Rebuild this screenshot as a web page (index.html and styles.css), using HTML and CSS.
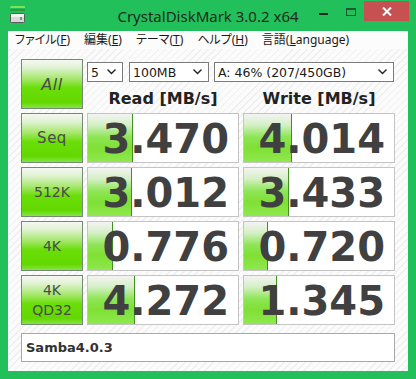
FILE: index.html
```html
<!DOCTYPE html>
<html lang="ja">
<head>
<meta charset="utf-8">
<title>CrystalDiskMark 3.0.2 x64</title>
<link rel="stylesheet" href="styles.css">
</head>
<body>
<div class="window">
  <div class="titlebar">
    <div class="tb-left">
      <svg class="app-icon" width="16" height="17" viewBox="0 0 16 17">
        <polygon points="1,0 15,0 15,2 0,2" fill="#7be35a"/>
        <polygon points="0,3 15,3 15,5 1,5" fill="#2f9a3a"/>
        <rect x="0.5" y="7.5" width="14" height="9" rx="1" fill="#d8d8d8" stroke="#5a5a5a"/>
        <rect x="1" y="8" width="13" height="3" fill="#f2f2f2"/>
        <rect x="10" y="11" width="2" height="3" fill="#39c046"/>
      </svg>
    </div>
    <div class="title">CrystalDiskMark 3.0.2 x64</div>
    <div class="tb-right">
      <span class="cap-min"></span>
      <span class="cap-max"></span>
      <span class="cap-close">
        <svg width="10" height="9" viewBox="0 0 10 9"><path d="M1 0.5 L9 8.5 M9 0.5 L1 8.5" stroke="#fff" stroke-width="2"/></svg>
      </span>
    </div>
  </div>
  <div class="client">
    <div class="menubar">
      <span class="menu-item">ファイル(<u>F</u>)</span>
      <span class="menu-item">編集(<u>E</u>)</span>
      <span class="menu-item">テーマ(<u>T</u>)</span>
      <span class="menu-item">ヘルプ(<u>H</u>)</span>
      <span class="menu-item">言語(<u>L</u>anguage)</span>
    </div>
    <div class="content">
      <div class="grid">
        <div class="btn btn-all">All</div>
        <div class="top">
          <div class="selects">
            <div class="select s-count"><span>5</span><svg class="chev" width="9" height="6" viewBox="0 0 9 6"><path d="M0.5 0.5 L4.5 4.5 L8.5 0.5" fill="none" stroke="#222" stroke-width="1.4"/></svg></div>
            <div class="select s-size"><span>100MB</span><svg class="chev" width="9" height="6" viewBox="0 0 9 6"><path d="M0.5 0.5 L4.5 4.5 L8.5 0.5" fill="none" stroke="#222" stroke-width="1.4"/></svg></div>
            <div class="select s-drive"><span>A: 46% (207/450GB)</span><svg class="chev" width="9" height="6" viewBox="0 0 9 6"><path d="M0.5 0.5 L4.5 4.5 L8.5 0.5" fill="none" stroke="#222" stroke-width="1.4"/></svg></div>
          </div>
          <div class="heads">
            <div class="head">Read [MB/s]</div>
            <div class="head">Write [MB/s]</div>
          </div>
        </div>

        <div class="btn btn-seq">Seq</div>
        <div class="val"><div class="bar" style="width:45px"></div><span class="num">3.470</span></div>
        <div class="val"><div class="bar" style="width:48px"></div><span class="num">4.014</span></div>

        <div class="btn">512K</div>
        <div class="val"><div class="bar" style="width:44px"></div><span class="num">3.012</span></div>
        <div class="val"><div class="bar" style="width:45px"></div><span class="num">3.433</span></div>

        <div class="btn">4K</div>
        <div class="val"><div class="bar" style="width:25px"></div><span class="num">0.776</span></div>
        <div class="val"><div class="bar" style="width:24px"></div><span class="num">0.720</span></div>

        <div class="btn btn-two">4K<br>QD32</div>
        <div class="val"><div class="bar" style="width:47px"></div><span class="num">4.272</span></div>
        <div class="val"><div class="bar" style="width:33px"></div><span class="num">1.345</span></div>
      </div>
      <div class="comment">Samba4.0.3</div>
    </div>
  </div>
</div>
</body>
</html>
```

FILE: styles.css
```css
* { box-sizing: border-box; }

body {
  margin: 0;
  background: #22c05a;
}

.window {
  width: 416px;
  height: 379px;
  background: #22c05a;
  display: flex;
  flex-direction: column;
  overflow: hidden;
}

/* ---------- title bar ---------- */
.titlebar {
  height: 31px;
  display: grid;
  grid-template-columns: 1fr auto 1fr;
  align-items: start;
}

.tb-left {
  padding: 6px 0 0 10px;
}

.app-icon { display: block; }

.title {
  font-family: "Noto Sans", "Open Sans", sans-serif;
  font-size: 15px;
  line-height: 20px;
  padding-top: 6px;
  color: #1d2a20;
  white-space: nowrap;
}

.tb-right {
  display: flex;
  justify-content: flex-end;
  align-items: flex-start;
  padding: 1px 7px 0 0;
}

.cap-min {
  width: 9px;
  height: 2px;
  background: #1a2a1e;
  margin: 12px 18px 0 0;
}

.cap-max {
  width: 10px;
  height: 8px;
  border: 1px solid #1e5a30;
  border-top-width: 2px;
  margin: 7px 8px 0 0;
}

.cap-close {
  width: 45px;
  height: 20px;
  background: #c75050;
  display: flex;
  align-items: center;
  justify-content: center;
}

.cap-close svg { display: block; }

/* ---------- client ---------- */
.client {
  flex: 1;
  margin: 0 8px 8px;
  display: flex;
  flex-direction: column;
  background-color: #fafafa;
  background-image: repeating-linear-gradient(135deg, #fbfbfb 0 4px, #efefef 4px 5px);
}

.menubar {
  height: 18px;
  background: #fcfcfc;
  display: flex;
  align-items: center;
  font-family: "Noto Sans", "Noto Sans CJK JP", sans-serif;
  font-feature-settings: "palt";
  font-size: 12px;
  line-height: 18px;
  color: #1a1a1a;
}

.menu-item {
  padding: 0 7px;
  white-space: nowrap;
}

.menu-item u { text-underline-offset: 1px; }

.content {
  flex: 1;
  padding: 10px 13px 9px;
  display: flex;
  flex-direction: column;
}

.grid {
  display: grid;
  grid-template-columns: 62px 152px 152px;
  grid-auto-rows: 50px;
  column-gap: 4px;
  row-gap: 4px;
}

/* ---------- buttons ---------- */
.btn {
  border: 1px solid #768876;
  background: linear-gradient(#f6f8f3 0%, #e0f2d2 16%, #a8e870 38%, #6ade08 58%, #62d800 88%, #86e444 100%);
  display: flex;
  align-items: center;
  justify-content: center;
  text-align: center;
  font-family: "DejaVu Sans", sans-serif;
  font-size: 14px;
  line-height: 19px;
  color: #4a4a4a;
}

.btn-all {
  font-size: 16px;
  font-style: italic;
  letter-spacing: 0.5px;
}

.btn-seq {
  font-size: 15px;
  letter-spacing: 0.5px;
}

.btn-two { line-height: 20px; }

/* ---------- top controls ---------- */
.top {
  grid-column: 2 / 4;
  display: flex;
  flex-direction: column;
}

.selects {
  display: flex;
  margin-top: 3px;
  height: 20px;
}

.select {
  height: 20px;
  border: 1px solid #7a7a7a;
  background: #fff;
  display: flex;
  align-items: center;
  justify-content: space-between;
  padding: 0 6px 0 3px;
  font-family: "DejaVu Sans", sans-serif;
  font-size: 12.5px;
  color: #1a1a1a;
  white-space: nowrap;
}

.chev { display: block; }

.s-count { width: 36px; }
.s-size { width: 80px; margin-left: 6px; }
.s-drive { width: 180px; margin-left: 5px; }

.heads {
  display: flex;
  column-gap: 4px;
  margin-top: 7px;
}

.head {
  width: 152px;
  text-align: center;
  font-family: "DejaVu Sans", sans-serif;
  font-weight: bold;
  font-size: 16px;
  line-height: 20px;
  color: #222;
  white-space: nowrap;
}

/* ---------- values ---------- */
.val {
  position: relative;
  border: 1px solid #c4c4c4;
  background: #fff;
  display: flex;
  align-items: center;
  justify-content: flex-end;
  padding: 2px 9px 0 0;
}

.bar {
  position: absolute;
  left: 0;
  top: 0;
  bottom: 0;
  border-right: 1px solid #3f8f24;
  background: linear-gradient(#f3f3f3 0%, #d6f0c8 22%, #8ee556 48%, #7fe034 70%, #8fe84e 100%);
}

.num {
  position: relative;
  font-family: "DejaVu Sans", sans-serif;
  font-weight: bold;
  font-size: 40px;
  line-height: 46px;
  color: #404040;
  white-space: nowrap;
}

/* ---------- comment ---------- */
.comment {
  margin-top: 8px;
  width: 374px;
  height: 29px;
  border: 1px solid #a8a8a8;
  background: #fff;
  padding: 0 4px;
  display: flex;
  align-items: center;
  font-family: "DejaVu Sans", sans-serif;
  font-weight: bold;
  font-size: 13px;
  color: #333;
}
```
